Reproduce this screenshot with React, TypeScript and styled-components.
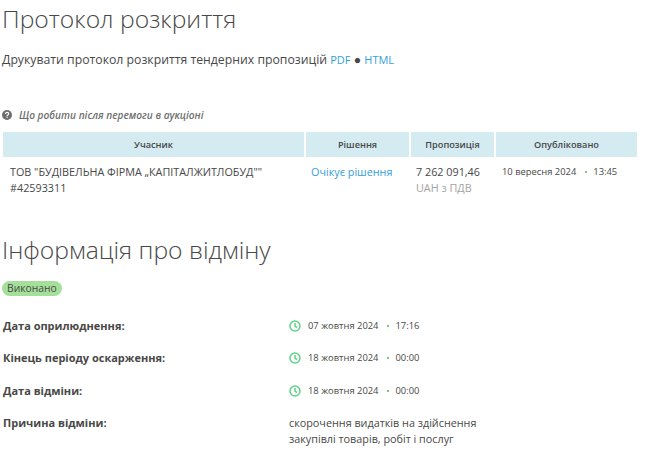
import React from 'react';
import styled, { createGlobalStyle } from 'styled-components';

const GlobalStyle = createGlobalStyle`
    html, body {
        margin: 0;
        padding: 0;
        background: #fff;
        font-family: "Open Sans", "Noto Sans", sans-serif;
        color: #484848;
    }
`

const Page = styled.div`
    width: 650px;
    height: 451px;
    overflow: hidden;
    padding: 0 2px;
    box-sizing: border-box;
`

const Title = styled.h1<{ $lineHeight?: number }>`
    margin: 0;
    height: 42px;
    font-size: 24.7px;
    line-height: ${p => p.$lineHeight ?? 42}px;
    font-weight: 300;
    color: #484848;
`

const PrintLine = styled.div`
    margin-top: 9px;
    font-size: 12.25px;
    line-height: 18px;
`

const Link = styled.a`
    color: #35a0dd;
`

const SmallLink = styled(Link)`
    font-size: 11px;
`

const Help = styled.div`
    margin-top: 38px;
    display: flex;
    align-items: center;
    gap: 7px;
    font-size: 10.15px;
    line-height: 16px;
    font-style: italic;
    font-weight: 600;
    color: #6f6f6f;
`

const Table = styled.div`
    margin: 9px 0 0 1px;
    width: 634px;
    display: grid;
    grid-template-columns: 301px 103px 83px 1fr;
    column-gap: 2px;
`

const Head = styled.div`
    height: 25px;
    background: #d4ebf2;
    font-size: 9.2px;
    line-height: 25px;
    font-weight: 600;
    text-align: center;
`

const Cell = styled.div<{ $inset?: number; $top?: number }>`
    padding: ${p => p.$top ?? 7}px 0 0 ${p => p.$inset ?? 7}px;
    font-size: 10.8px;
    line-height: 16px;
`

const Muted = styled.div`
    color: #a3a3a3;
`

const DateText = styled.span`
    display: inline-flex;
    align-items: center;
    gap: 6px;
    font-size: 9.4px;
    line-height: 14px;
`

const Dot = styled.span`
    width: 2px;
    height: 2px;
    border-radius: 50%;
    background: #4caf50;
    margin: 0 0 0 3px;
`

const SubTitle = styled(Title)`
    margin-top: 33px;
`

const Badge = styled.span`
    display: inline-block;
    margin-top: 10px;
    padding: 0 5.5px 0 5px;
    height: 15px;
    border-radius: 8px;
    background: #a5e09a;
    font-size: 10.3px;
    line-height: 15px;
`

const Rows = styled.div`
    margin-top: 21px;
    display: grid;
    grid-template-columns: 287px 1fr;
`

const Label = styled.div`
    padding-left: 1px;
    font-size: 11px;
    line-height: 16px;
    font-weight: 700;
`

const Value = styled.div`
    display: flex;
    align-items: center;
    gap: 7px;
    height: 16px;
    margin-bottom: 16.3px;
`

const Reason = styled.div`
    font-size: 10.8px;
    line-height: 16px;
`

const Clock = () => (
    <svg width="12" height="12" viewBox="0 0 12 12" fill="none" stroke="#5fd38a" strokeWidth="1.5">
        <circle cx="6" cy="6" r="5" />
        <path d="M6 3V6.2L8 7.6" />
    </svg>
)

const HelpIcon = () => (
    <svg width="10" height="10" viewBox="0 0 10 10">
        <circle cx="5" cy="5" r="5" fill="#6f6f6f" />
        <path d="M3.4 3.9C3.5 2.9 4.2 2.4 5.1 2.4C6 2.4 6.7 3 6.7 3.8C6.7 4.9 5.1 5 5.1 6" fill="none" stroke="#fff" strokeWidth="1.1" />
        <rect x="4.5" y="6.6" width="1.2" height="1.2" fill="#fff" />
    </svg>
)

const dates = [
    { label: 'Дата оприлюднення:', date: '07 жовтня 2024', time: '17:16' },
    { label: 'Кінець періоду оскарження:', date: '18 жовтня 2024', time: '00:00' },
    { label: 'Дата відміни:', date: '18 жовтня 2024', time: '00:00' },
]

export default function App() {
    return <Page>
        <GlobalStyle />
        <Title $lineHeight={38}>Протокол розкриття</Title>
        <PrintLine>
            Друкувати протокол розкриття тендерних пропозицій <SmallLink>PDF</SmallLink> ● <SmallLink>HTML</SmallLink>
        </PrintLine>
        <Help><HelpIcon />Що робити після перемоги в аукціоні</Help>
        <Table>
            <Head>Учасник</Head>
            <Head>Рішення</Head>
            <Head>Пропозиція</Head>
            <Head>Опубліковано</Head>
            <Cell>ТОВ "БУДІВЕЛЬНА ФІРМА „КАПІТАЛЖИТЛОБУД""<br />#42593311</Cell>
            <Cell $inset={5}><Link>Очікує рішення</Link></Cell>
            <Cell $inset={5}>7 262 091,46<Muted>UAH з ПДВ</Muted></Cell>
            <Cell $inset={6} $top={6}><DateText>10 вересня 2024<Dot />13:45</DateText></Cell>
        </Table>
        <SubTitle>Інформація про відміну</SubTitle>
        <Badge>Виконано</Badge>
        <Rows>
            {dates.map(d => <React.Fragment key={d.label}>
                <Label>{d.label}</Label>
                <Value><Clock /><DateText>{d.date}<Dot />{d.time}</DateText></Value>
            </React.Fragment>)}
            <Label>Причина відміни:</Label>
            <Reason>скорочення видатків на здійснення<br />закупівлі товарів, робіт і послуг</Reason>
        </Rows>
    </Page>
}
